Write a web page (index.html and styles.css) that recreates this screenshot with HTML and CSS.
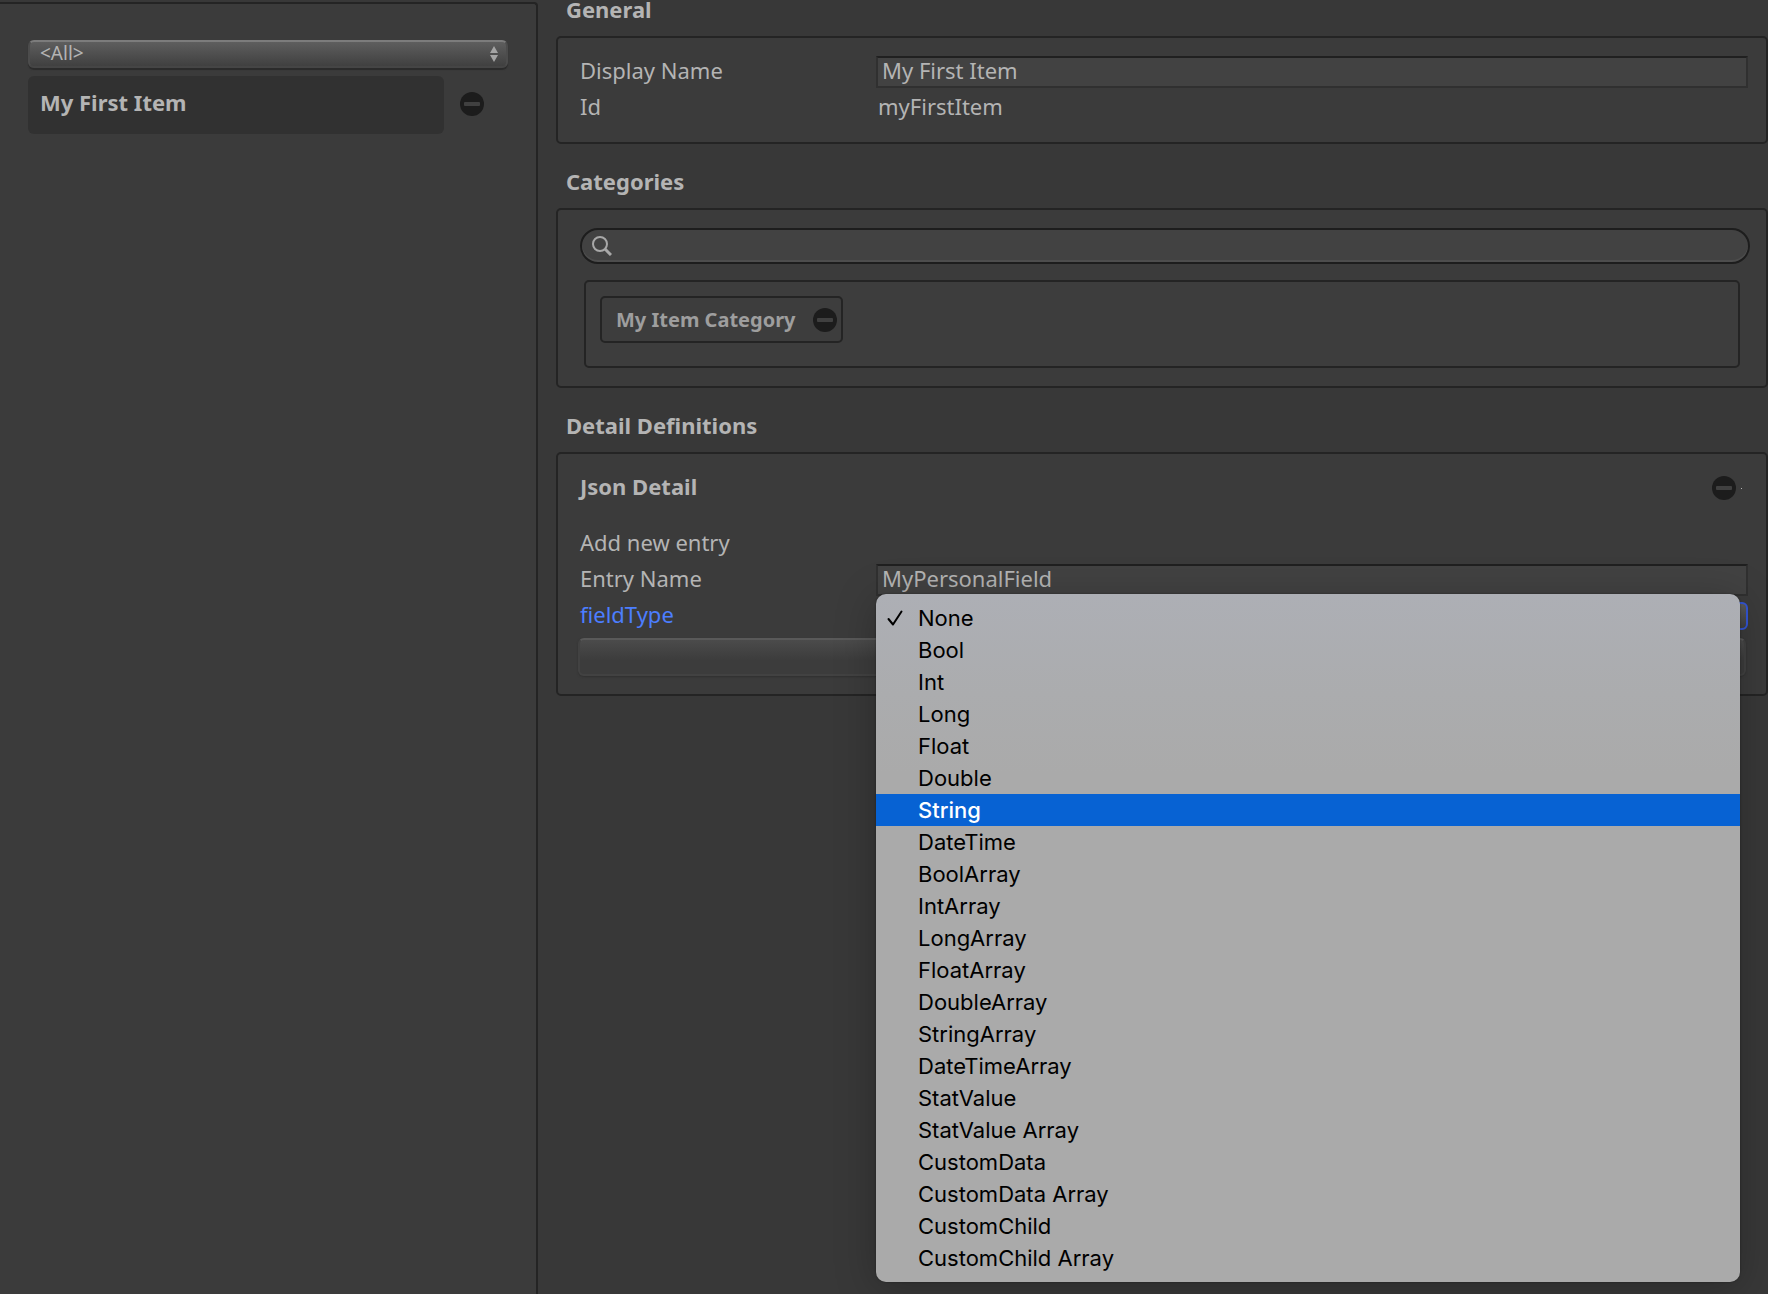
FILE: index.html
```html
<!DOCTYPE html>
<html lang="en">
<head>
<meta charset="utf-8">
<title>Item Editor</title>
<link rel="stylesheet" href="styles.css">
</head>
<body>
<svg class="defs" aria-hidden="true">
  <symbol id="minus" viewBox="0 0 24 24">
    <circle cx="12" cy="12" r="12" fill="#1c1c1c"/>
    <rect x="4" y="10" width="16" height="4" rx="1" fill="#404040"/>
  </symbol>
</svg>
<div class="app">
  <aside class="sidebar">
    <div class="popup">
      <select class="filter" aria-label="Category filter"><option>&lt;All&gt;</option></select>
      <svg class="arrows" viewBox="0 0 8 16" aria-hidden="true"><path d="M4 0L8 7H0zM4 16L8 9H0z" fill="#a4a4a4"/></svg>
    </div>
    <div class="item-row">
      <button class="item" type="button">My First Item</button>
      <button class="remove" type="button" aria-label="Remove item"><svg class="icon"><use href="#minus"/></svg></button>
    </div>
  </aside>

  <main class="main">
    <section class="section">
      <h2 class="heading">General</h2>
      <div class="panel">
        <div class="row">
          <label class="label" for="name">Display Name</label>
          <input class="input" id="name" type="text" value="My First Item">
        </div>
        <div class="row">
          <span class="label">Id</span>
          <span class="value">myFirstItem</span>
        </div>
      </div>
    </section>

    <section class="section">
      <h2 class="heading">Categories</h2>
      <div class="panel">
        <div class="search">
          <svg class="glass" viewBox="0 0 20 20" aria-hidden="true"><circle cx="8" cy="8" r="7" fill="none" stroke="#a8a8a8" stroke-width="2"/><path d="M13 13l6 6" stroke="#a8a8a8" stroke-width="3"/></svg>
          <input class="search-input" type="search" aria-label="Search categories">
        </div>
        <div class="tags">
          <div class="tag">
            <span class="tag-text">My Item Category</span>
            <button class="remove" type="button" aria-label="Remove category"><svg class="icon"><use href="#minus"/></svg></button>
          </div>
        </div>
      </div>
    </section>

    <section class="section">
      <h2 class="heading">Detail Definitions</h2>
      <div class="panel">
        <div class="detail-head">
          <h3 class="detail-title">Json Detail</h3>
          <button class="remove" type="button" aria-label="Remove detail"><svg class="icon"><use href="#minus"/></svg></button>
          <span class="dot"></span>
        </div>
        <div class="row"><span class="label">Add new entry</span></div>
        <div class="row">
          <label class="label" for="entry">Entry Name</label>
          <input class="input" id="entry" type="text" value="MyPersonalField">
        </div>
        <div class="row">
          <label class="label active" for="type">fieldType</label>
          <div class="field">
            <select class="type-select" id="type"><option>None</option></select>
            <ul class="menu" role="listbox" aria-label="fieldType">
              <li class="option" role="option" aria-selected="true"><svg class="check" viewBox="0 0 16 16" aria-hidden="true"><path d="M1.500 9L6 14.500L14.500 1.500" fill="none" stroke="#000" stroke-width="2" stroke-linecap="round" stroke-linejoin="round"/></svg>None</li>
              <li class="option" role="option">Bool</li>
              <li class="option" role="option">Int</li>
              <li class="option" role="option">Long</li>
              <li class="option" role="option">Float</li>
              <li class="option" role="option">Double</li>
              <li class="option highlighted" role="option">String</li>
              <li class="option" role="option">DateTime</li>
              <li class="option" role="option">BoolArray</li>
              <li class="option" role="option">IntArray</li>
              <li class="option" role="option">LongArray</li>
              <li class="option" role="option">FloatArray</li>
              <li class="option" role="option">DoubleArray</li>
              <li class="option" role="option">StringArray</li>
              <li class="option" role="option">DateTimeArray</li>
              <li class="option" role="option">StatValue</li>
              <li class="option" role="option">StatValue Array</li>
              <li class="option" role="option">CustomData</li>
              <li class="option" role="option">CustomData Array</li>
              <li class="option" role="option">CustomChild</li>
              <li class="option" role="option">CustomChild Array</li>
            </ul>
          </div>
        </div>
        <button class="add" type="button" aria-label="Add"></button>
      </div>
    </section>
  </main>
</div>
</body>
</html>
```
FILE: styles.css
```css
* { box-sizing: border-box; }

body {
  margin: 0;
  background: #383838;
  color: #b4b4b4;
  font: 22px/28px "Noto Sans", "Open Sans", sans-serif;
}

button, input, select {
  margin: 0;
  font: inherit;
  color: inherit;
  appearance: none;
  outline: none;
}

.defs { display: none; }

.app {
  display: flex;
  gap: 18px;
  min-height: 100vh;
}

/* Item list */
.sidebar {
  flex: 0 0 538px;
  margin-top: 2px;
  padding: 36px 28px;
  border: solid #242424;
  border-width: 2px 2px 0 0;
  border-radius: 0 4px 0 0;
  background: #3b3b3b;
}

.popup { display: grid; align-items: center; }
.popup > * { grid-area: 1 / 1; }

.filter {
  width: 100%;
  height: 28px;
  padding: 0 10px 2px;
  border: 2px solid #4c4c4c;
  border-top-color: #7c7c7c;
  border-bottom-color: #454545;
  border-radius: 6px;
  background: linear-gradient(#5e5e5e, #404040);
  box-shadow: 0 2px 1px #2b2b2b;
  font-size: 19px;
  line-height: 22px;
}

.arrows {
  justify-self: end;
  width: 8px;
  height: 16px;
  margin-right: 10px;
}

.item-row {
  display: flex;
  align-items: center;
  gap: 16px;
  margin-top: 8px;
  padding-right: 24px;
}

.item-row .remove { padding-bottom: 2px; }

.item {
  flex: 1;
  height: 58px;
  padding: 0 12px 6px;
  border: 0;
  border-radius: 6px;
  background: #313131;
  font-weight: 700;
  text-align: left;
}

.remove {
  display: flex;
  padding: 0;
  border: 0;
  background: none;
}

.icon { width: 24px; height: 24px; }

/* Inspector */
.main { flex: 1; min-width: 0; }
.section { margin-bottom: 28px; }

.heading {
  margin: 0 0 18px;
  padding-left: 10px;
  font-size: 22px;
  line-height: 18px;
}

.panel {
  display: flex;
  flex-direction: column;
  gap: 4px;
  padding: 18px 18px 18px 22px;
  border: 2px solid #242424;
  border-radius: 5px;
  background: #3b3b3b;
}

.row { display: flex; height: 32px; }
.label { flex: 0 0 296px; }
.label.active { color: #4c7eff; }
.value { padding-left: 2px; }

.input {
  flex: 1;
  min-width: 0;
  padding: 0 4px 4px;
  border: 2px solid #303030;
  border-top-color: #202020;
  background: #424242;
}

.search {
  display: flex;
  align-items: center;
  height: 36px;
  margin-right: -2px;
  padding: 0 10px 0;
  border: 2px solid #1d1d1d;
  border-radius: 18px;
  background: #424242;
  box-shadow: inset 0 -2px 0 #4d4d4d;
}

.glass { width: 20px; height: 20px; }

.search-input {
  flex: 1;
  height: 28px;
  border: 0;
  background: none;
}

.tags {
  display: flex;
  align-items: flex-start;
  height: 88px;
  margin: 12px 8px 0 4px;
  padding: 14px;
  border: 2px solid #242424;
  border-radius: 5px;
  background: #3d3d3d;
}

.tag {
  display: flex;
  align-items: center;
  gap: 17px;
  height: 47px;
  padding: 0 4px 0 14px;
  border: 2px solid #242424;
  border-radius: 5px;
}

.tag-text {
  color: #9e9e9e;
  font-size: 20px;
  font-weight: 700;
}

.detail-head {
  display: flex;
  align-items: center;
  gap: 5px;
  height: 32px;
  margin-bottom: 20px;
  padding-right: 6px;
}

.detail-title {
  flex: 1;
  align-self: flex-start;
  margin: 0;
  font-size: 22px;
}

.dot { width: 1px; height: 1px; background: #b4b4b4; }

.field {
  position: relative;
  display: flex;
  align-items: center;
  flex: 1;
}

.type-select {
  width: 100%;
  height: 28px;
  border: 2px solid #3355d4;
  border-radius: 6px;
  background: linear-gradient(#5a5a5a, #404040);
}

.add {
  height: 38px;
  margin: 2px 2px 0 -2px;
  border: 2px solid #424242;
  border-top-color: #595959;
  border-radius: 6px;
  background: linear-gradient(#4b4b4b, #3c3c3c 60%);
  box-shadow: 0 1px 2px #303030;
}

/* Open drop-down */
.menu {
  position: absolute;
  z-index: 1;
  top: -6px;
  left: 0;
  right: 8px;
  margin: 0;
  padding: 8px 0;
  border-radius: 10px;
  background: linear-gradient(#adafb5, #abacae 100px, #aaa 180px);
  box-shadow: 0 6px 40px rgba(0, 0, 0, 0.25), 0 0 2px rgba(0, 0, 0, 0.4);
  color: #000;
  font: 22px/32px Inter, "Liberation Sans", sans-serif;
  list-style: none;
}

.option {
  display: flex;
  align-items: center;
  height: 32px;
  padding-left: 42px;
}

.option.highlighted {
  background: #0762d3;
  color: #fff;
  font-weight: 500;
}

.check {
  width: 16px;
  height: 16px;
  margin: 0 15px 0 -31px;
}
```
